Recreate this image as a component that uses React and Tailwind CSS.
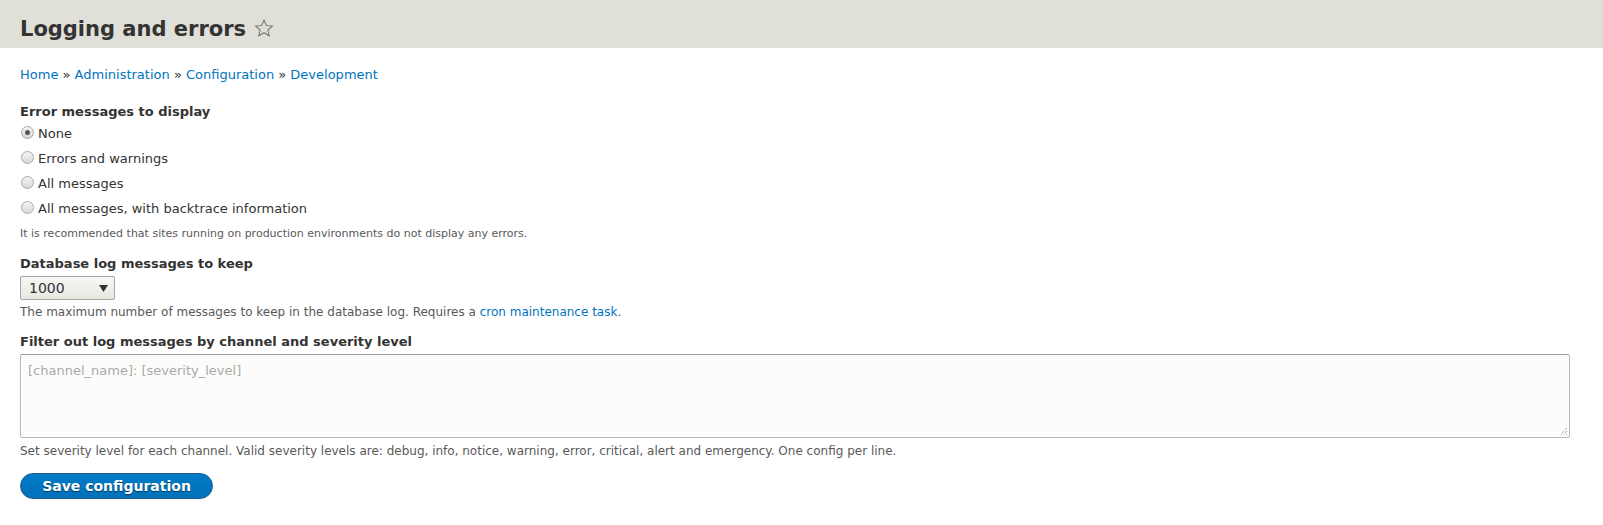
import React from "react";

function Radio({ checked, label }) {
  return (
    <div className="flex items-center h-[25px]">
      <span className="relative w-[13px] h-[13px] rounded-full border border-[#a9a9a9] bg-gradient-to-b from-[#f4f4f4] to-[#d8d8d8] ml-[1px] mr-[4px] flex items-center justify-center shrink-0 -mt-[3px]">
        {checked && <span className="w-[5px] h-[5px] rounded-full bg-[#555]" />}
      </span>
      <span className="text-[13px] text-[#333]">{label}</span>
    </div>
  );
}

export default function App() {
  return (
    <div className="min-h-[525px] bg-white text-[#333]" style={{ fontFamily: '"DejaVu Sans", sans-serif' }}>
      <div className="bg-[#e0e0d8] h-[48px] px-[20px] flex items-center pt-[10px]">
        <h1 className="text-[21px] font-bold text-[#333] leading-none">Logging and errors</h1>
        <svg width="20" height="20" viewBox="0 0 24 24" className="ml-[8px] mb-[2px]">
          <path d="M12 2.5l2.9 6.6 7.1.6-5.4 4.7 1.6 7-6.2-3.7-6.2 3.7 1.6-7L2 9.7l7.1-.6z" fill="none" stroke="#7a7a72" strokeWidth="1.3" strokeLinejoin="miter" />
        </svg>
      </div>
      <div className="px-[20px]">
        <div className="pt-[17px] text-[13px] leading-[20px]">
          <a className="text-[#0074bd]">Home</a> » <a className="text-[#0074bd]">Administration</a> » <a className="text-[#0074bd]">Configuration</a> » <a className="text-[#0074bd]">Development</a>
        </div>
        <div className="mt-[17px] text-[13px] font-bold leading-[20px]">Error messages to display</div>
        <div className="-mt-[1px]">
          <Radio checked label="None" />
          <Radio label="Errors and warnings" />
          <Radio label="All messages" />
          <Radio label="All messages, with backtrace information" />
        </div>
        <div className="mt-[5px] text-[11px] leading-[16px] text-[#595959]">It is recommended that sites running on production environments do not display any errors.</div>
        <div className="mt-[12px] text-[13px] font-bold leading-[20px]">Database log messages to keep</div>
        <div className="mt-[2px] w-[95px] h-[24px] border border-[#a6a6a6] rounded-[2px] bg-gradient-to-b from-[#f6f6f3] to-[#e8e8e3] flex items-center justify-between pl-[8px] pr-[6px]">
          <span className="text-[14px] text-[#333]">1000</span>
          <svg width="9" height="7" viewBox="0 0 9 7"><path d="M0 0h9L4.5 7z" fill="#333" /></svg>
        </div>
        <div className="mt-[3px] text-[12px] leading-[18px] text-[#595959]">
          The maximum number of messages to keep in the database log. Requires a <a className="text-[#0074bd]">cron maintenance task</a>.
        </div>
        <div className="mt-[11px] text-[13px] font-bold leading-[20px]">Filter out log messages by channel and severity level</div>
        <div className="relative mt-[2px] mr-[13px] h-[84px] border border-[#b8b8b8] border-t-[#999] rounded-[2px] bg-[#fcfcfa] px-[7px] pt-[3px]">
          <span className="text-[13px] text-[#aaa]">[channel_name]: [severity_level]</span>
          <svg width="9" height="9" viewBox="0 0 9 9" className="absolute right-[1px] bottom-[1px]">
            <path d="M8 1L1 8M8 4L4 8M8 7L7 8" stroke="#666" strokeWidth="0.8" strokeDasharray="1 1" />
          </svg>
        </div>
        <div className="mt-[4px] text-[12px] leading-[18px] text-[#595959]">
          Set severity level for each channel. Valid severity levels are: debug, info, notice, warning, error, critical, alert and emergency. One config per line.
        </div>
        <button className="mt-[13px] h-[26px] w-[193px] rounded-[20px] border border-[#1e5c90] bg-gradient-to-b from-[#007bc6] to-[#0071b8] text-white text-[14px] font-bold" style={{ textShadow: "0 1px 1px rgba(0,0,0,0.5)" }}>
          Save configuration
        </button>
      </div>
    </div>
  );
}
